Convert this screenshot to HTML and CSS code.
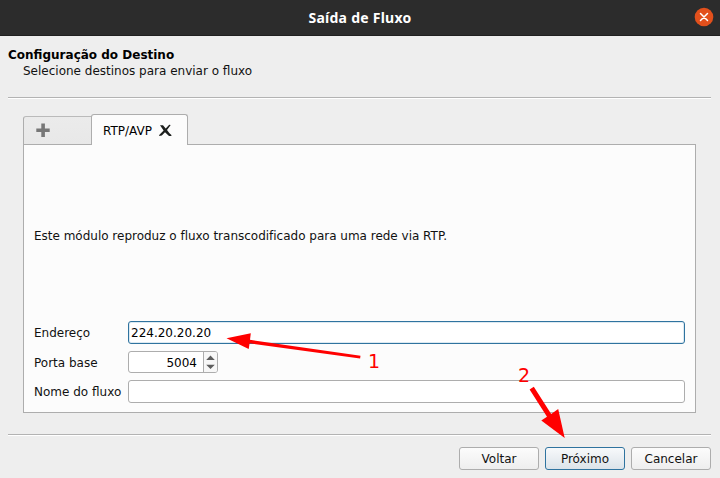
FILE: index.html
```html
<!DOCTYPE html>
<html lang="pt-BR">
<head>
<meta charset="utf-8">
<title>Saída de Fluxo</title>
<link rel="stylesheet" href="styles.css">
</head>
<body>
<div class="window">
  <header class="titlebar">
    <h1 class="title">Saída de Fluxo</h1>
    <button class="close" aria-label="Fechar">
      <svg width="20" height="20" viewBox="0 0 20 20"><circle cx="10" cy="10" r="9.3" fill="#e2501c"/><path d="M6.500 6.500l7 7M13.500 6.500l-7 7" stroke="#fff" stroke-width="1.500" stroke-linecap="round"/></svg>
    </button>
  </header>
  <section class="heading">
    <h2>Configuração do Destino</h2>
    <p>Selecione destinos para enviar o fluxo</p>
  </section>
  <main class="content">
    <div class="tabs">
      <div class="tab tab-add"><svg width="14" height="14" viewBox="0 0 14 14"><path d="M5.300 0.500h3.600v5h4.800v3.600H8.900v4.900H5.300V9.100H0.300V5.500h5z" fill="#777"/></svg></div>
      <div class="tab tab-active"><span>RTP/AVP</span><svg class="tab-close" width="13" height="13" viewBox="0 0 13 13" fill="#1c1f1d"><path d="M1 1.200h3L6.700 4.600 10.200.8 11.700 1 8 6l2.500 3.200 1.900 1.800v.9h-2.400L6 8.200 2.800 11.500.2 12v-1L4.600 6.600z"/></svg></div>
    </div>
    <div class="panel">
      <p class="description">Este módulo reproduz o fluxo transcodificado para uma rede via RTP.</p>
      <div class="form">
        <span>Endereço</span><div class="field focused">224.20.20.20</div>
        <span class="port-label">Porta base</span>
        <div class="spin"><span class="number">5004</span><span class="steps"><svg width="13" height="20" viewBox="0 0 13 20" fill="#5d5d5d"><path d="M2.200 8L6.500 3.600 10.800 8zM2.200 12.700h8.600L6.500 17z"/></svg></span></div>
        <span>Nome do fluxo</span><div class="field"></div>
      </div>
    </div>
  </main>
  <footer class="actions">
    <button class="btn">Voltar</button>
    <button class="btn primary">Próximo</button>
    <button class="btn">Cancelar</button>
  </footer>
  <svg class="annotations" width="720" height="478" viewBox="0 0 720 478">
    <g fill="#f00">
      <path d="M226.500 338.300L250.800 333.300 250 339.800 360.500 355.700 360.100 358.500 249.600 343.300 248.700 349z"/>
      <path d="M564.700 438L541.300 420.500 547 416.700 529.600 389.500 533.800 386.700 551.200 413.900 558.200 409z"/>
      <text x="368" y="368">1</text>
      <text x="518" y="382">2</text>
    </g>
  </svg>
</div>
</body>
</html>
```

FILE: styles.css
```css
* { box-sizing: border-box; }
body { margin: 0; background: #eee; color: #111; font: 12px/16px "DejaVu Sans", sans-serif; }
h1, h2, p { margin: 0; }
button { font: inherit; color: inherit; padding: 0; }
.window { position: relative; width: 720px; height: 478px; display: flex; flex-direction: column; overflow: hidden; }
.titlebar { height: 36px; flex: none; display: grid; grid-template-columns: 26px 1fr 26px; align-items: center; background: #2c2c2c; border-bottom: 1px solid #202020; }
.title { grid-column: 2; text-align: center; font: bold 14px/20px "Noto Sans", sans-serif; letter-spacing: 0.25px; color: #fff; }
.close { width: 20px; height: 20px; border: 0; background: none; margin-bottom: 1px; }
.close svg { display: block; }
.heading { margin: 0 9px 0 8px; padding-top: 11px; height: 63px; flex: none; border-bottom: 1px solid #fff; box-shadow: inset 0 -1px #b3b3b3; }
.heading h2 { font-size: 12px; line-height: 16px; color: #000; }
.heading p { padding-left: 15px; }
.content { flex: 1; padding: 15px 24px 21px 23px; display: flex; flex-direction: column; }
.tabs { display: flex; align-items: flex-end; height: 31px; position: relative; z-index: 1; margin-bottom: -1px; }
.tab { display: flex; align-items: center; border: 1px solid #adadad; }
.tab-add { width: 69px; height: 29px; border-color: #bababa; border-left-color: #adadad; border-bottom-color: #adadad; border-top-left-radius: 3px; background: linear-gradient(#ebebeb, #e8e8e8); padding: 0 0 1px 12px; }
.tab-active { width: 97px; height: 31px; margin-left: -1px; border-bottom: 0; border-radius: 3px 3px 0 0; background: #fcfcfc; padding: 2px 0 0 11px; gap: 7px; color: #000; }
.tab-close { margin-bottom: 2px; }
.panel { flex: 1; border: 1px solid #adadad; background: #fcfcfc; padding: 0 10px 9px; display: flex; flex-direction: column; justify-content: space-between; }
.description { padding-top: 83px; letter-spacing: -0.01px; }
.form { display: grid; grid-template-columns: 87px 1fr; grid-template-rows: 23px 22px 23px; row-gap: 7px; column-gap: 7px; align-items: center; white-space: nowrap; }
.port-label { padding-top: 2px; }
.field { height: 100%; border: 1px solid #adadad; border-radius: 3px; background: #fff; padding: 3px 2px; color: #000; }
.focused { border-color: #2f739f; box-shadow: inset 0 0 0 1px #dce9f1; }
.spin { width: 90px; height: 22px; border: 1px solid #adadad; border-radius: 3px; background: #fff; display: flex; }
.number { flex: 1; text-align: right; padding: 3px 6px 0 0; color: #000; }
.steps { width: 14px; border-left: 1px solid #adadad; background: #f7f7f7; border-radius: 0 2px 2px 0; }
.steps svg { display: block; }
.actions { margin: 0 9px 0 8px; height: 44px; flex: none; border-top: 1px solid #b3b3b3; box-shadow: inset 0 1px #fff; display: flex; justify-content: flex-end; gap: 6px; padding-top: 12px; }
.btn { width: 80px; height: 23px; border: 1px solid #adadad; border-radius: 3px; background: linear-gradient(#fcfcfc, #eee); color: #111; }
.primary { border-color: #2f739f; background: linear-gradient(#f7f9fb, #dce3e9); }
.annotations { position: absolute; inset: 0; pointer-events: none; }
.annotations text { font: 19px "DejaVu Sans", sans-serif; }
```
